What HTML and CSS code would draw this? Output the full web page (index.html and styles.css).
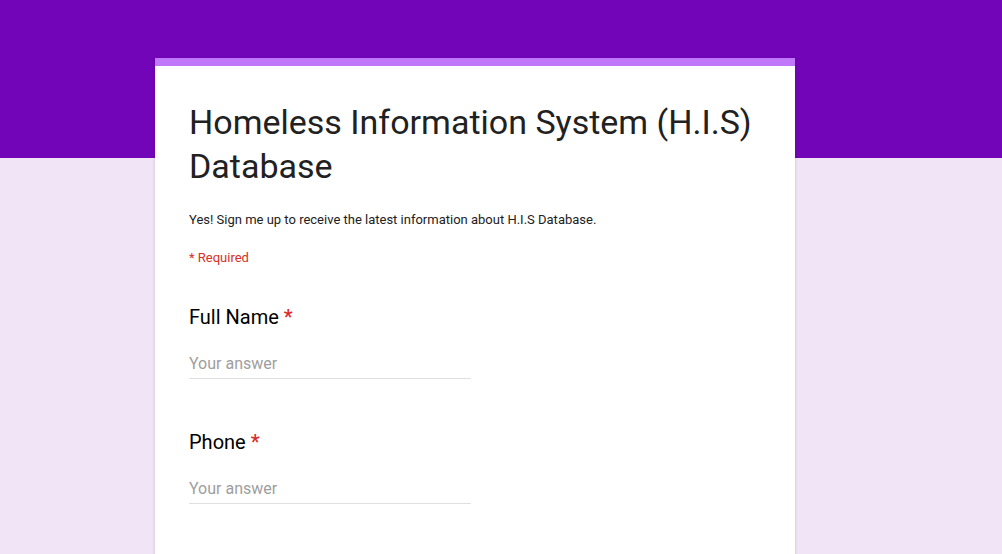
FILE: index.html
```html
<!DOCTYPE html>
<html>
<head>
<meta charset="utf-8">
<link rel="stylesheet" href="styles.css">
</head>
<body>
<div class="page">
  <div class="banner"></div>
  <div class="wrap">
    <div class="card">
      <div class="accent"></div>
      <div class="content">
        <h1 class="title">Homeless Information System (H.I.S) Database</h1>
        <p class="desc">Yes! Sign me up to receive the latest information about H.I.S Database.</p>
        <p class="required">* Required</p>
        <div class="question">
          <div class="label">Full Name <span class="star">*</span></div>
          <div class="answer">Your answer</div>
        </div>
        <div class="question">
          <div class="label">Phone <span class="star">*</span></div>
          <div class="answer">Your answer</div>
        </div>
      </div>
    </div>
  </div>
</div>
</body>
</html>
```
FILE: styles.css
```css
html, body {
  margin: 0;
  padding: 0;
  height: 100%;
  overflow: hidden;
}
body {
  background: #f0e4f6;
  font-family: Roboto, "Liberation Sans", Arial, sans-serif;
}
.page {
  position: relative;
  height: 554px;
}
.banner {
  height: 158px;
  background: #7205b8;
}
.wrap {
  position: absolute;
  top: 58px;
  left: 0;
  right: 0;
  display: flex;
  padding-left: 155px;
}
.card {
  width: 640px;
  background: #fff;
  height: 520px;
  box-shadow: 0 1px 3px rgba(0,0,0,0.18);
}
.accent {
  height: 8px;
  background: #c177f9;
}
.content {
  padding: 34px 34px 0 34px;
}
.title {
  margin: 0;
  font-size: 34px;
  line-height: 44px;
  font-weight: 400;
  color: #212121;
}
.desc {
  margin: 22px 0 0;
  font-size: 13px;
  line-height: 20px;
  color: #212121;
}
.required {
  margin: 18px 0 0;
  font-size: 13px;
  line-height: 20px;
  color: #d93025;
}
.question {
  margin-top: 37px;
}
.question + .question {
  margin-top: 51px;
}
.label {
  font-size: 20px;
  line-height: 24px;
  color: #000;
}
.star {
  color: #db2c2c;
  font-weight: 500;
}
.answer {
  margin-top: 23px;
  width: 282px;
  height: 26px;
  font-size: 16px;
  line-height: 24px;
  color: #9e9e9e;
  border-bottom: 1px solid #e0e0e0;
  box-sizing: content-box;
}
```
